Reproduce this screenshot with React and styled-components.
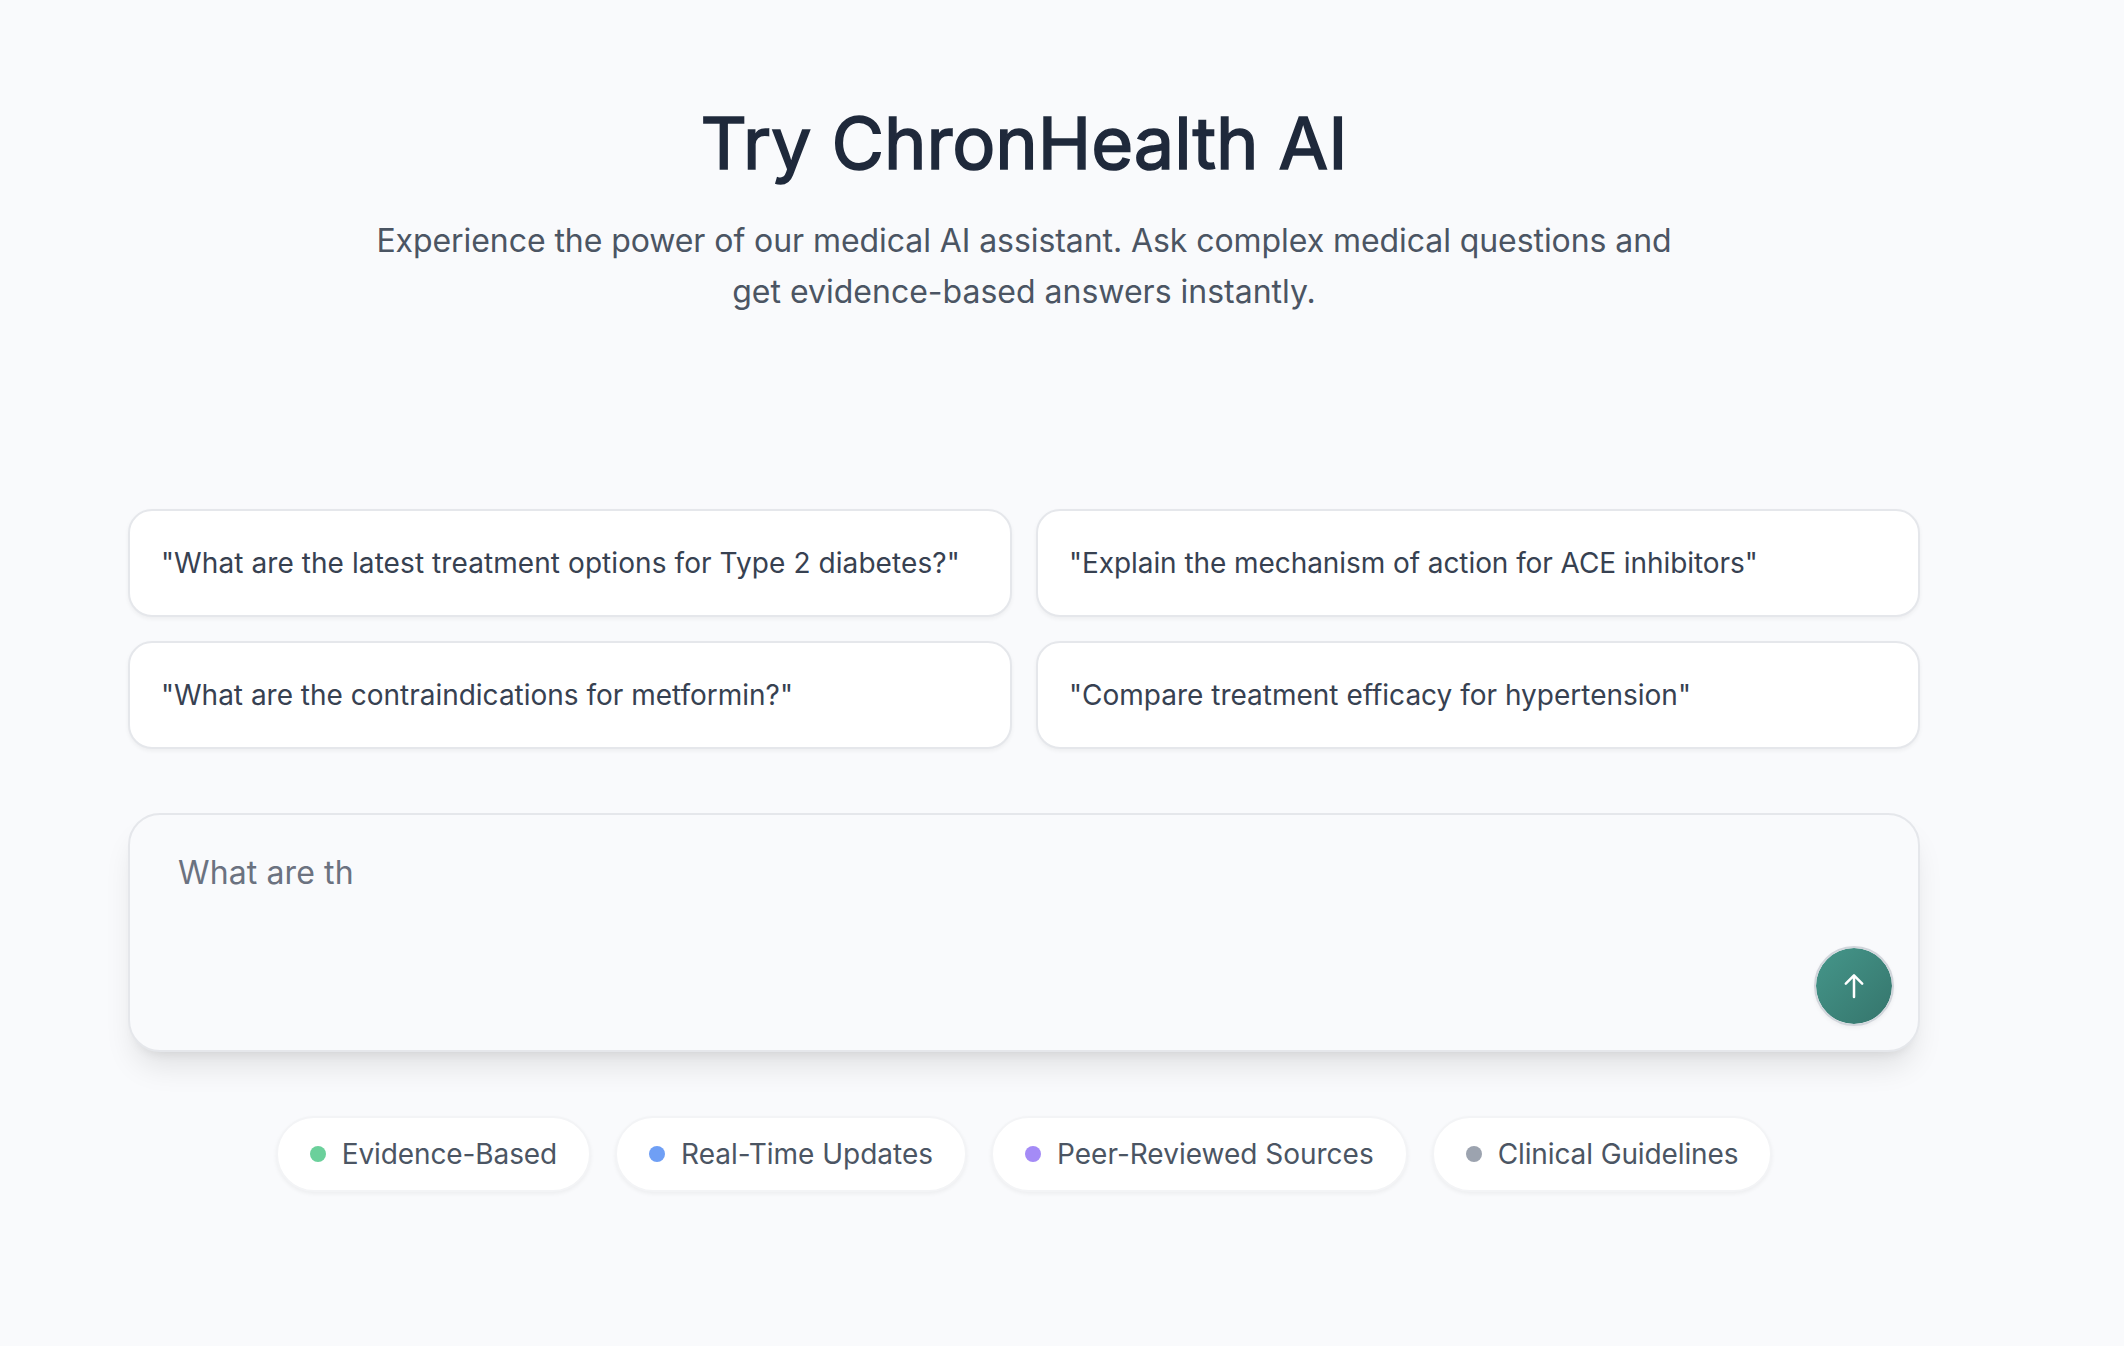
import React, { useState } from "react";
import styled, { createGlobalStyle } from "styled-components";

const PROMPTS = [
  { text: '"What are the latest treatment options for Type 2 diabetes?"', tracking: 0.08 },
  { text: '"Explain the mechanism of action for ACE inhibitors"', tracking: -0.07 },
  { text: '"What are the contraindications for metformin?"', tracking: -0.01 },
  { text: '"Compare treatment efficacy for hypertension"', tracking: 0 },
];

const FEATURES = [
  { label: "Evidence-Based", color: "#6bd09b", tracking: -0.1 },
  { label: "Real-Time Updates", color: "#6f9ff5", tracking: 0 },
  { label: "Peer-Reviewed Sources", color: "#a48bf6", tracking: 0 },
  { label: "Clinical Guidelines", color: "#9ca3af", tracking: -0.12 },
];

function App () {
  const [question, setQuestion] = useState("");

  return (
    <>
      <GlobalStyle />
      <Section>
        <Header>
          <Title>Try ChronHealth AI</Title>
          <Subtitle>
            Experience the power of our medical AI assistant. Ask complex medical questions and get evidence-based answers instantly.
          </Subtitle>
        </Header>
        <Prompts>
          {PROMPTS.map(({ text, tracking }) => (
            <Prompt key={text} $tracking={tracking} onClick={() => setQuestion(text.slice(1, -1))}>
              {text}
            </Prompt>
          ))}
        </Prompts>
        <AskBox>
          <Question
            placeholder="What are th"
            value={question}
            onChange={e => setQuestion(e.target.value)}
          />
          <SendButton aria-label="Send">
            <ArrowIcon viewBox="0 0 28 28">
              <path d="M14 25V3.4M5.8 11.6L14 3.4l8.2 8.2" />
            </ArrowIcon>
          </SendButton>
        </AskBox>
        <Features>
          {FEATURES.map(({ label, color, tracking }) => (
            <Feature key={label} $tracking={tracking}>
              <Dot $color={color} />
              {label}
            </Feature>
          ))}
        </Features>
      </Section>
    </>
  )
}

const GlobalStyle = createGlobalStyle`
  * {
    box-sizing: border-box;
  }
  body {
    margin: 0;
    background: #f9fafc;
    font-family: Inter, "Liberation Sans", sans-serif;
    -webkit-font-smoothing: antialiased;
  }
`;

const Section = styled.section`
  width: 1792px;
  min-height: 1346px;
  margin-left: 128px;
  padding-top: 103px;
`;

const Header = styled.header`
  display: flex;
  flex-direction: column;
  align-items: center;
  height: 406px;
`;

const Title = styled.h2`
  margin: 0 0 32px;
  font-size: 72px;
  line-height: 80px;
  font-weight: 400;
  letter-spacing: -0.1px;
  color: #1f293b;
  -webkit-text-stroke: 1.6px #1f293b;
`;

const Subtitle = styled.p`
  width: 1344px;
  margin: 0;
  font-size: 32px;
  line-height: 51px;
  text-align: center;
  color: #4b5563;

  &::first-line {
    letter-spacing: -0.07px;
  }
`;

const Prompts = styled.div`
  display: grid;
  grid-template-columns: 1fr 1fr;
  gap: 24px;
  margin-bottom: 64px;
`;

const Prompt = styled.button`
  height: 108px;
  padding: 0 31px;
  border: 2px solid #e5e7eb;
  border-radius: 24px;
  background: #fff;
  box-shadow: 0 2px 4px rgba(0, 0, 0, 0.05);
  font: 400 28px/40px Inter, "Liberation Sans", sans-serif;
  letter-spacing: ${props => props.$tracking}px;
  text-align: left;
  white-space: nowrap;
  color: #374151;
  cursor: pointer;
`;

const AskBox = styled.div`
  display: flex;
  align-items: flex-end;
  height: 239px;
  padding: 0 24px 24px 48px;
  border: 2px solid #e5e7eb;
  border-radius: 32px;
  background: #f9fafc;
  box-shadow: 0 20px 30px -6px rgba(0, 0, 0, 0.1), 0 8px 12px -8px rgba(0, 0, 0, 0.1);
`;

const Question = styled.textarea`
  flex: 1;
  align-self: flex-start;
  height: 180px;
  padding: 32px 0 0;
  border: 0;
  outline: 0;
  resize: none;
  background: transparent;
  font: 400 32px/52px Inter, "Liberation Sans", sans-serif;
  letter-spacing: 0.12px;
  color: #374151;

  &::placeholder {
    color: #6b7280;
  }
`;

const SendButton = styled.button`
  display: flex;
  align-items: center;
  justify-content: center;
  width: 80px;
  height: 80px;
  padding: 0;
  border: 2px solid #d1d5db;
  border-radius: 50%;
  background: linear-gradient(135deg, #45968a, #35756c) padding-box;
  box-shadow: 0 2px 4px rgba(0, 0, 0, 0.05);
  cursor: pointer;
`;

const ArrowIcon = styled.svg`
  width: 28px;
  height: 28px;
  fill: none;
  stroke: #fff;
  stroke-width: 2.5;
  stroke-linecap: round;
  stroke-linejoin: round;
`;

const Features = styled.div`
  display: flex;
  justify-content: center;
  gap: 24px;
  margin-top: 64px;
`;

const Feature = styled.div`
  display: flex;
  align-items: center;
  height: 76px;
  padding: 0 32px;
  border: 2px solid #f3f4f6;
  border-radius: 38px;
  background: #fff;
  box-shadow: 0 2px 4px rgba(0, 0, 0, 0.05);
  font-size: 28px;
  line-height: 40px;
  letter-spacing: ${props => props.$tracking}px;
  white-space: nowrap;
  color: #4b5563;
`;

const Dot = styled.span`
  width: 16px;
  height: 16px;
  margin-right: 16px;
  border-radius: 50%;
  background: ${props => props.$color};
`;

export default App;
